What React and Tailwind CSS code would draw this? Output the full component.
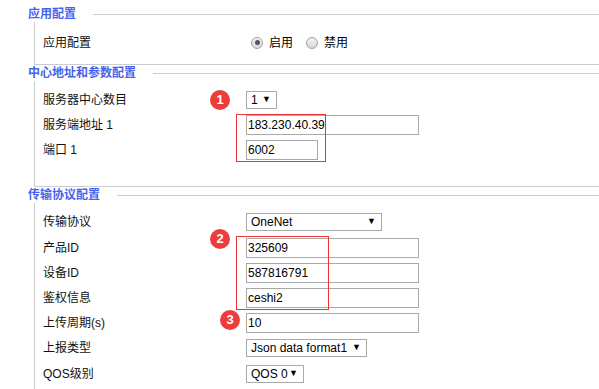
import React from "react";

const FONT = { fontFamily: '"Liberation Sans", "Noto Sans CJK SC", sans-serif' };

const Legend = ({ title }) => (
  <div className="flex h-[16px]">
    <span className="ml-[28px] text-[12px] leading-[16px] font-bold text-[#4564ee]">
      {title}
    </span>
    <div className="ml-[17px] mt-[8px] h-px flex-1 bg-[#cccccc]" />
  </div>
);

const Row = ({ label, h = "h-[25px]", children }) => (
  <div className={`flex items-center ${h}`}>
    <div className="w-[211px] pl-[8px] text-[12px] text-[#111]">{label}</div>
    <div className="relative flex items-center">{children}</div>
  </div>
);

const TextBox = ({ value, w = "w-[173px]" }) => (
  <div
    className={`${w} h-[20px] border border-[#a9a9a9] bg-white pl-[1px] text-[12px] leading-[18px] text-black`}
  >
    {value}
  </div>
);

const Select = ({ value, w }) => (
  <div
    className={`${w} h-[18px] border border-[#a9a9a9] bg-white flex items-center justify-between pl-[4px] pr-[5px] text-[12px] text-black`}
  >
    <span>{value}</span>
    <span className="text-[9px]">▼</span>
  </div>
);

const Badge = ({ n, className }) => (
  <div
    className={`absolute z-10 w-[20px] h-[20px] rounded-full bg-[#ee3b3b] text-white text-[13px] font-bold flex items-center justify-center ${className}`}
  >
    {n}
  </div>
);

// red marker frame drawn over the inputs
const RedBox = ({ className }) => (
  <div
    className={`absolute z-10 border border-[#ee3333] pointer-events-none ${className}`}
  />
);

const Radio = ({ checked, label }) => (
  <div className="flex items-center">
    <div className="w-[12px] h-[12px] rounded-full border border-[#a0a0a0] bg-gradient-to-b from-[#f4f4f4] to-[#d8d8d8] flex items-center justify-center">
      {checked && <div className="w-[5px] h-[5px] rounded-full bg-[#555]" />}
    </div>
    <span className="ml-[6px] text-[12px] text-black">{label}</span>
  </div>
);

export default function App() {
  return (
    <div className="w-[599px] h-[389px] bg-white overflow-hidden pt-[6px]" style={FONT}>
      {/* 应用配置 */}
      <Legend title="应用配置" />
      <div className="ml-[34px] border-l border-b border-[#cccccc] pt-[8px] pb-[9px]">
        <Row label="应用配置">
          <div className="flex items-center gap-[13px] pl-[5px]">
            <Radio checked label="启用" />
            <Radio label="禁用" />
          </div>
        </Row>
      </div>

      {/* 中心地址和参数配置 */}
      <Legend title="中心地址和参数配置" />
      <div className="ml-[34px] border-l border-b border-[#cccccc] pt-[6px] pb-[24px]">
        <Row label="服务器中心数目">
          <Badge n="1" className="left-[-36px] top-1/2 -translate-y-1/2" />
          <Select value="1" w="w-[31px]" />
        </Row>
        <Row label="服务端地址 1">
          <RedBox className="left-[-10px] top-[-1px] w-[90px] h-[48px]" />
          <TextBox value="183.230.40.39" />
        </Row>
        <Row label="端口 1">
          <TextBox value="6002" w="w-[72px]" />
        </Row>
      </div>

      {/* 传输协议配置 */}
      <Legend title="传输协议配置" />
      <div className="ml-[34px] border-l border-[#cccccc] pt-[6px] pb-[6px]">
        <Row label="传输协议" h="h-[26px]">
          <Select value="OneNet" w="w-[136px]" />
        </Row>
        <Row label="产品ID">
          <Badge n="2" className="left-[-36px] top-[-9px]" />
          <RedBox className="left-[-10px] top-[-2px] w-[93px] h-[74px]" />
          <TextBox value="325609" />
        </Row>
        <Row label="设备ID">
          <TextBox value="587816791" />
        </Row>
        <Row label="鉴权信息">
          <TextBox value="ceshi2" />
        </Row>
        <Row label="上传周期(s)">
          <Badge n="3" className="left-[-26px] top-[-3px]" />
          <TextBox value="10" />
        </Row>
        <Row label="上报类型" h="h-[26px]">
          <Select value="Json data format1" w="w-[121px]" />
        </Row>
        <Row label="QOS级别">
          <Select value="QOS 0" w="w-[58px]" />
        </Row>
      </div>
    </div>
  );
}
